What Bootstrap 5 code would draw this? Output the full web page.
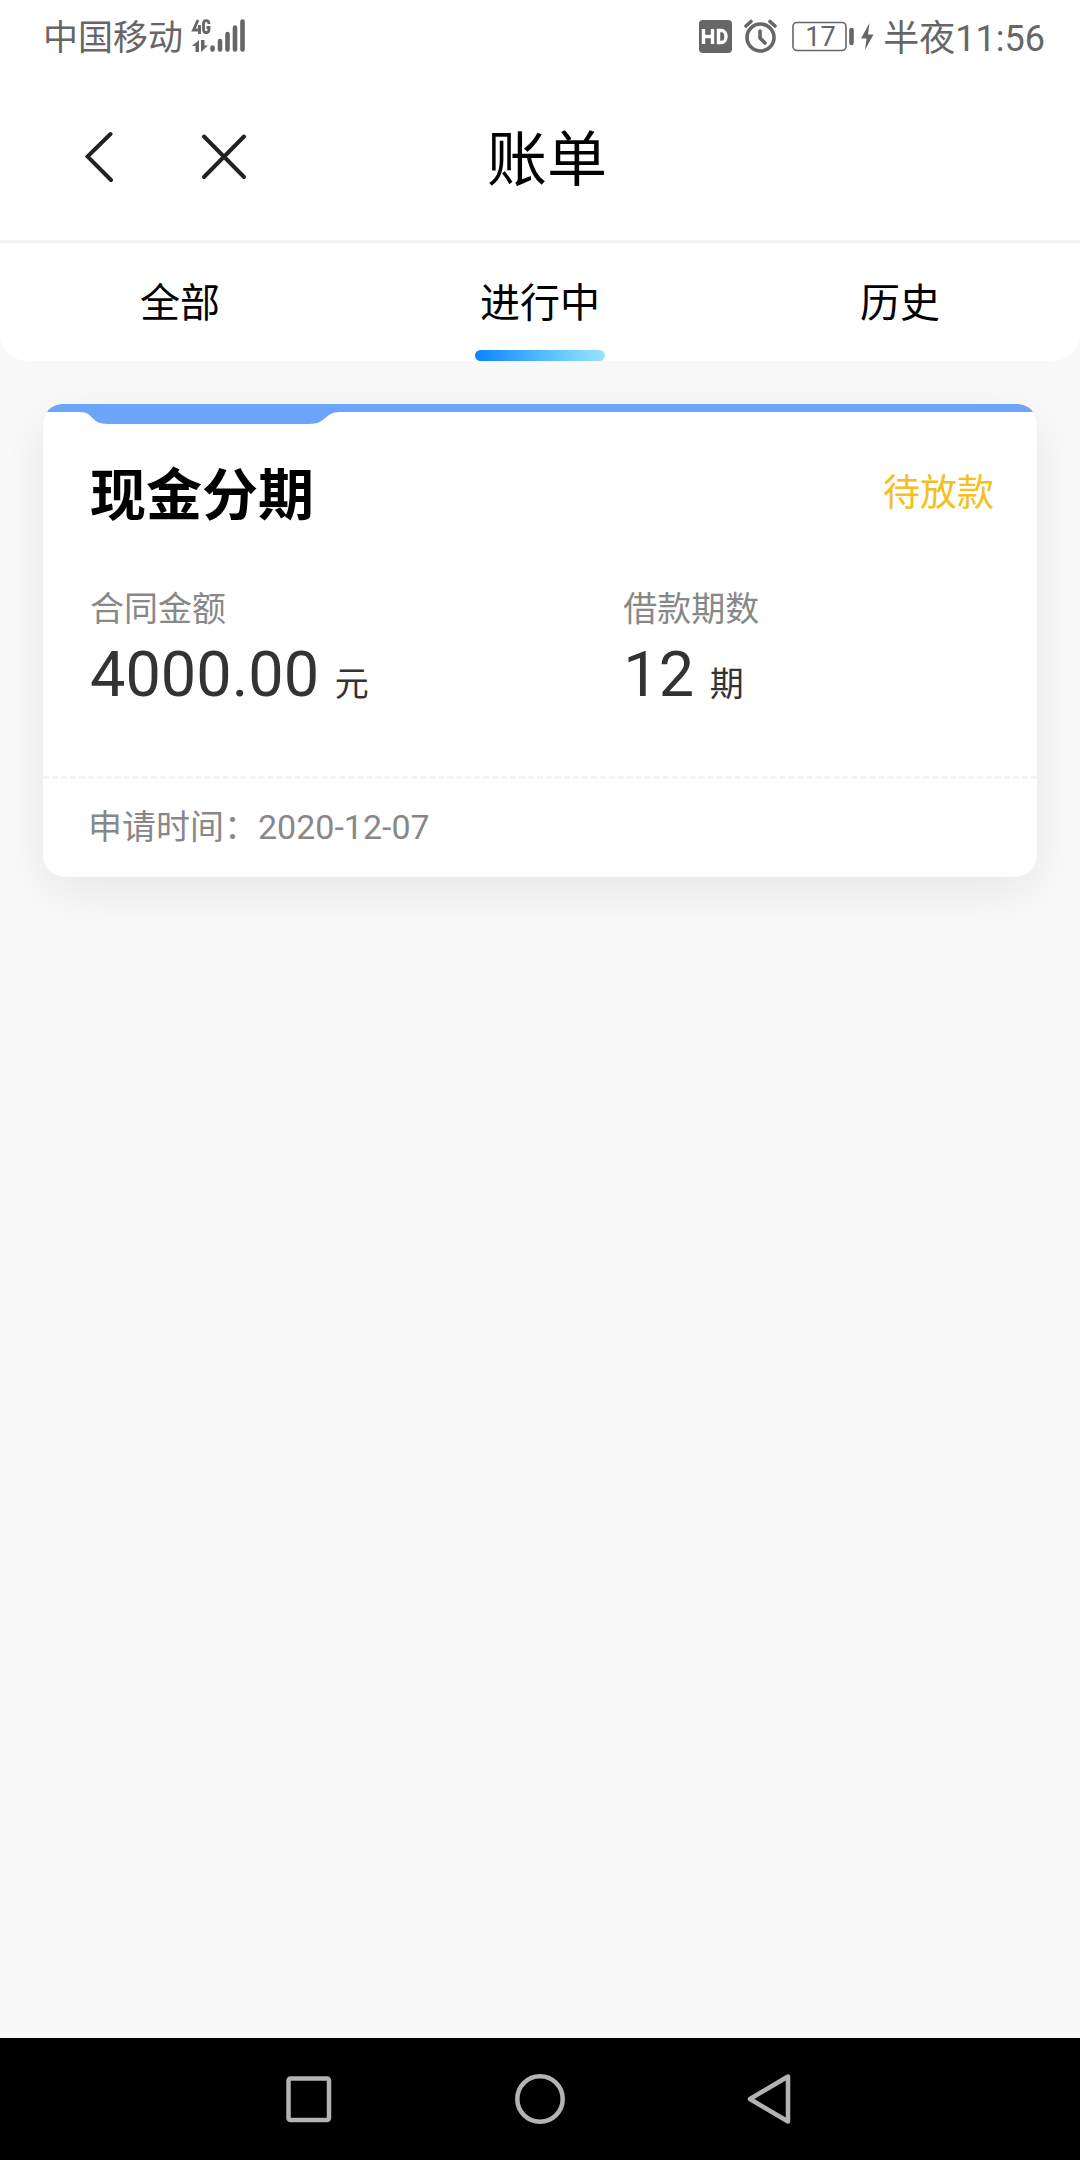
<!DOCTYPE html>
<html lang="zh-CN">
<head>
<meta charset="utf-8">
<meta name="viewport" content="width=device-width, initial-scale=1">
<title>账单</title>
<link rel="stylesheet" href="https://cdn.jsdelivr.net/npm/bootstrap@5.3.0/dist/css/bootstrap.min.css">
<style>
body { font-family: Roboto, "Noto Sans CJK SC", sans-serif; background: #f9f9f9; color: #000; }
svg { display: block; flex: none; }
.status { height: 74px; padding: 8px 35px 0 43px; font-size: 35px; line-height: 62px; color: #666; }
.status-time { font-size: 36px; }
.topbar { height: 166px; padding-left: 14px; }
.topbar h1 { font-size: 60px; line-height: 80px; font-weight: 400; padding-top: 8px; }
.topbar .btn { border: 0; }
.topbar-side { flex: 1 1 0; gap: 56px; }
.topbar-side .btn:first-child { margin-left: 55px; }
.tabs { border-top: 3px solid #f4f4f4; background: #f9f9f9; }
.tabs .nav { background: #fff; border-radius: 0 0 28px 28px; }
.tabs .nav-link { color: #000; font-size: 40px; line-height: 60px; padding: 31px 0 0; gap: 16px; }
.tab-line { width: 130px; height: 11px; border-radius: 6px; }
.active .tab-line { background: linear-gradient(90deg, #0a84ff, #5ec4ff 60%, #98e4ff); }
.content { padding: 43px; }
.bill { border: 0; border-radius: 22px; box-shadow: 0 14px 52px rgba(0, 0, 0, .08); }
.bill-top { height: 20px; border-radius: 22px 22px 0 0; background: linear-gradient(#6ba5fa 8px, transparent 8px); overflow: hidden; }
.bill-top svg { margin-left: 37px; }
.bill-main { padding: 36px 43px 59px 47px; }
.bill-main h2 { font-size: 56px; line-height: 72px; font-weight: 700; }
.state { font-size: 37px; line-height: 68px; color: #f4c020; }
.term { font-size: 34px; line-height: 48px; color: #888; font-weight: 400; }
.amount { color: #333; font-size: 63px; line-height: 84px; }
.unit { font-size: 34px; line-height: 1; }
.figures { margin-top: 53px; }
.figure-sum { flex: 0 0 59%; }
.bill-foot { border-top: 3px dashed #f4f4f4; padding: 24px 45px 26px; font-size: 34px; line-height: 48px; color: #888; }
.sysnav { height: 122px; background: #000; gap: 180px; }
.sysnav .btn { border: 0; width: 52px; }
</style>
<script src="https://cdn.jsdelivr.net/npm/bootstrap@5.3.0/dist/js/bootstrap.bundle.min.js"></script>
</head>
<body>
<div class="d-flex flex-column min-vh-100">
  <div class="bg-white">
    <div class="status d-flex justify-content-between align-items-start">
      <div class="d-flex align-items-start">
        <span>中国移动</span>
        <svg class="ms-1" width="62" height="54" viewBox="187 8 62 54" fill="#666" aria-hidden="true">
          <path d="M198 20l-4.500 10h7.500M199.500 25v9M209 24c0-4.500-5.500-4.500-5.500 0v5c0 5 5.500 5 5.500 0v-1.500h-2.500" fill="none" stroke="#666" stroke-width="2.800"/>
          <path d="M192 46l7-6v12h-3.500v-6zM201 40h3.500v5.500h3.500l-7 6.500z"/>
          <path d="M212.500 47.500v2M220 41v8.500M227.500 34v15.500M235 27.500v22M242.500 21.500v28" stroke="#666" stroke-width="4.600" stroke-linecap="round"/>
        </svg>
      </div>
      <div class="d-flex align-items-start">
        <svg width="180" height="54" viewBox="699 8 180 54" aria-hidden="true">
          <rect x="699" y="20" width="33" height="33" rx="4" fill="#666"/>
          <path d="M703.500 29v15M712.500 29v15M703.500 36.500h9M718.500 30.500h3c6 0 6 12 0 12h-3z" fill="none" stroke="#fff" stroke-width="3.400"/>
          <g fill="none" stroke="#666" stroke-width="3.600" stroke-linecap="round" stroke-linejoin="round">
            <circle cx="760.500" cy="37.500" r="13.500"/>
            <path d="M760 31v7l5 5M746 26l5-4.500M775 26l-5-4.500"/>
          </g>
          <rect x="793" y="22.500" width="53" height="28" rx="4" fill="none" stroke="#666" stroke-width="1.600"/>
          <path d="M851.500 30v13" stroke="#666" stroke-width="4.600" stroke-linecap="round"/>
          <text x="820.500" y="46" font-family="Roboto" font-size="27" text-anchor="middle" fill="#666">17</text>
          <path d="M869.500 23l-8.500 15.500h5.500L865 50l8.500-15.500h-5.500z" fill="#666"/>
        </svg>
        <span class="status-time ms-1">半夜11:56</span>
      </div>
    </div>
    <header class="topbar d-flex align-items-center">
      <div class="topbar-side d-flex">
        <button class="btn p-3" aria-label="返回"><svg width="28" height="52" viewBox="0 0 28 52" fill="none" stroke="#222" stroke-width="4" stroke-linecap="round"><path d="M25.500 3L2.500 25.500 26 49"/></svg></button>
        <button class="btn p-3" aria-label="关闭"><svg width="46" height="52" viewBox="0 0 46 52" fill="none" stroke="#222" stroke-width="4" stroke-linecap="round"><path d="M3 5.500L43 46M43 5.500L3 46"/></svg></button>
      </div>
      <h1 class="m-0">账单</h1>
      <div class="topbar-side"></div>
    </header>
  </div>
  <div class="tabs">
    <nav class="nav">
      <a class="nav-link col-4 d-flex flex-column align-items-center" href="#"><span>全部</span><span class="tab-line"></span></a>
      <a class="nav-link active col-4 d-flex flex-column align-items-center" href="#" aria-current="page"><span>进行中</span><span class="tab-line"></span></a>
      <a class="nav-link col-4 d-flex flex-column align-items-center" href="#"><span>历史</span><span class="tab-line"></span></a>
    </nav>
  </div>
  <main class="content flex-grow-1">
    <section class="card bill">
      <div class="bill-top"><svg width="262" height="20" viewBox="0 0 262 20" fill="#6ba5fa"><path d="M0 0V8C14 8 10 20 28 20H229C247 20 244 8 260 8V0z"/></svg></div>
      <div class="bill-main">
        <div class="d-flex justify-content-between align-items-start">
          <h2 class="m-0">现金分期</h2>
          <span class="state">待放款</span>
        </div>
        <div class="figures d-flex">
          <div class="figure-sum">
            <div class="term">合同金额</div>
            <div class="amount">4000.00 <span class="unit">元</span></div>
          </div>
          <div>
            <div class="term">借款期数</div>
            <div class="amount">12 <span class="unit">期</span></div>
          </div>
        </div>
      </div>
      <div class="bill-foot">申请时间：2020-12-07</div>
    </section>
  </main>
  <footer class="sysnav d-flex justify-content-center align-items-center">
    <button class="btn p-0" aria-label="最近任务"><svg width="52" height="52" viewBox="0 0 52 52" fill="none" stroke="#b3b3b3" stroke-width="4.500"><rect x="6.500" y="5.500" width="40.500" height="41.500" rx="2"/></svg></button>
    <button class="btn p-0" aria-label="主页"><svg width="52" height="52" viewBox="0 0 52 52" fill="none" stroke="#b3b3b3" stroke-width="4.500"><circle cx="26" cy="26" r="22.700"/></svg></button>
    <button class="btn p-0" aria-label="后退"><svg width="52" height="52" viewBox="0 0 52 52" fill="none" stroke="#b3b3b3" stroke-width="4.500" stroke-linejoin="round"><path d="M42 3.500v45L4 26z"/></svg></button>
  </footer>
</div>
</body>
</html>
